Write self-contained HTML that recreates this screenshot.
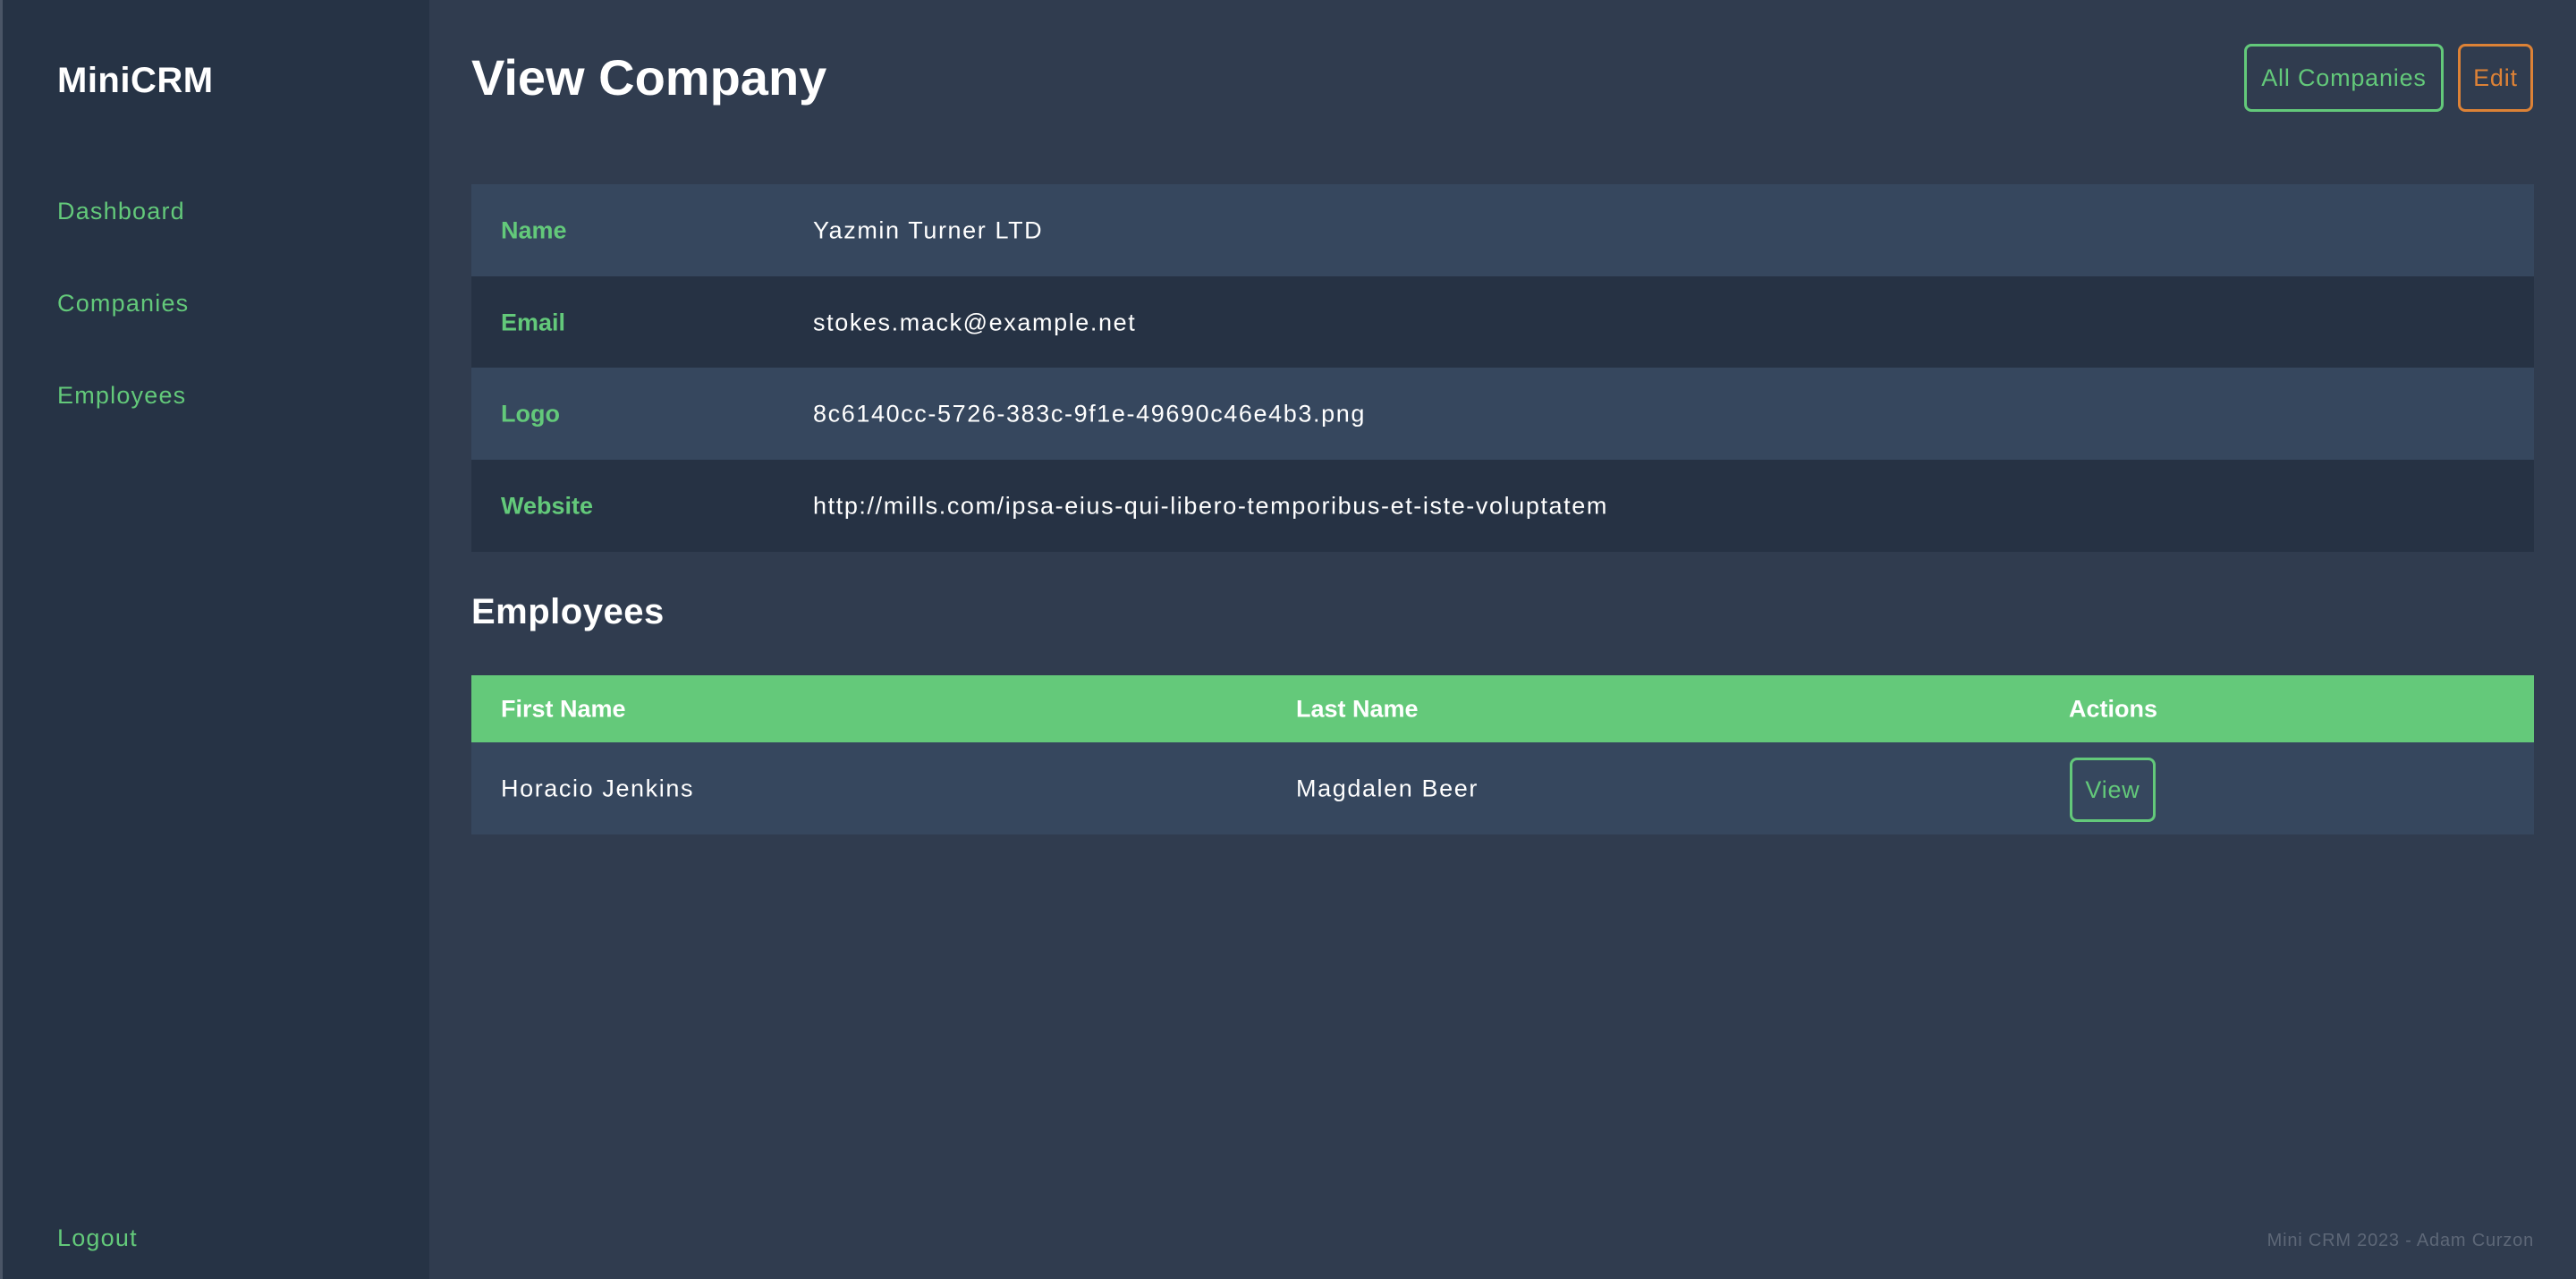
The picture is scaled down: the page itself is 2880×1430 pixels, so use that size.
<!DOCTYPE html>
<html><head><meta charset="utf-8"><style>
*{margin:0;padding:0;box-sizing:border-box}
html,body{width:2880px;height:1430px;overflow:hidden;background:#303c4f;font-family:"Liberation Sans",sans-serif}
.side{position:absolute;left:0;top:0;width:480px;height:1430px;background:#263345;border-left:3px solid #4a5566}
.abs{position:absolute;white-space:nowrap}
.brand{left:64px;top:68px;font-size:40px;font-weight:bold;color:#fff;letter-spacing:0.5px}
.nav{left:64px;font-size:27px;color:#63c97a;letter-spacing:1.2px}
h1{position:absolute;left:527px;top:54px;font-size:56px;color:#fff;letter-spacing:0px}
.btn{position:absolute;border:3px solid #63c97a;border-radius:8px;color:#63c97a;font-size:27px;display:flex;align-items:center;justify-content:center;letter-spacing:0.8px}
.row{position:absolute;left:527px;width:2306px;height:103px}
.row span{position:absolute;top:50%;transform:translateY(-50%);font-size:27px;white-space:nowrap}
.lab{left:33px;color:#63c97a;font-weight:bold}
.val{left:382px;color:#fff;letter-spacing:1.6px}
.a{background:#36475e}.b{background:#263244}
h2{position:absolute;left:527px;top:662px;font-size:40px;color:#fff;letter-spacing:0.5px}
.th{position:absolute;left:527px;top:755px;width:2306px;height:75px;background:#64c97a}
.th span{position:absolute;top:50%;transform:translateY(-50%);font-size:27px;color:#fff;font-weight:bold}
</style></head><body>
<div class="side"></div>
<div class="abs brand">MiniCRM</div>
<div class="abs nav" style="top:221px">Dashboard</div>
<div class="abs nav" style="top:324px">Companies</div>
<div class="abs nav" style="top:427px">Employees</div>
<div class="abs nav" style="top:1369px">Logout</div>
<h1>View Company</h1>
<div class="btn" style="left:2509px;top:49px;width:223px;height:76px">All Companies</div>
<div class="btn" style="left:2748px;top:49px;width:84px;height:76px;border-color:#dd8236;color:#dd8236">Edit</div>
<div class="row a" style="top:206px"><span class="lab">Name</span><span class="val">Yazmin Turner LTD</span></div>
<div class="row b" style="top:309px"><span class="lab">Email</span><span class="val">stokes.mack@example.net</span></div>
<div class="row a" style="top:411px"><span class="lab">Logo</span><span class="val">8c6140cc-5726-383c-9f1e-49690c46e4b3.png</span></div>
<div class="row b" style="top:514px"><span class="lab">Website</span><span class="val">http://mills.com/ipsa-eius-qui-libero-temporibus-et-iste-voluptatem</span></div>
<h2>Employees</h2>
<div class="th"><span style="left:33px">First Name</span><span style="left:922px">Last Name</span><span style="left:1786px">Actions</span></div>
<div class="row a" style="top:830px"><span class="val" style="left:33px">Horacio Jenkins</span><span class="val" style="left:922px">Magdalen Beer</span></div>
<div class="btn" style="left:2314px;top:847px;width:96px;height:72px">View</div>
<div class="abs" style="right:47px;top:1376px;font-size:20px;color:#5d6777;letter-spacing:0.8px">Mini CRM 2023 - Adam Curzon</div>
</body></html>
